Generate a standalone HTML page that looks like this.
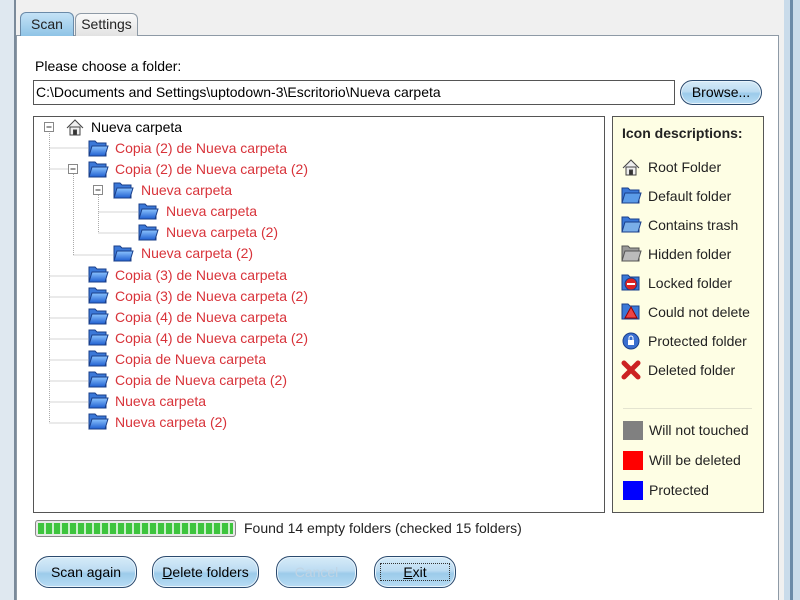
<!DOCTYPE html>
<html><head><meta charset="utf-8"><style>
*{box-sizing:border-box;margin:0;padding:0}
html,body{width:800px;height:600px;overflow:hidden}
body{background:#f0f0f0;font-family:"Liberation Sans",sans-serif;font-size:14px;color:#000;position:relative}
.a{position:absolute}
.t{position:absolute;white-space:nowrap;line-height:18px}
.red{color:#d8333a}
.btn{position:absolute;border:1px solid #2b4a6e;border-radius:14px;background:linear-gradient(#d6ebf8 0%,#bcdcf2 45%,#9ccbea 55%,#b8dcf4 100%);text-align:center;line-height:28px;font-size:14px;box-shadow:inset 0 0 0 1px #e8f4fc}
.lg{position:absolute;left:622px;white-space:nowrap;font-size:14px;color:#222}
</style></head><body>
<div class="a" style="left:0;top:0;width:16px;height:600px;background:#dfe8f0"></div>
<div class="a" style="left:14px;top:0;width:2px;height:600px;background:#7a8a9a"></div>
<div class="a" style="left:784px;top:0;width:16px;height:600px;background:#c9dbea"></div>
<div class="a" style="left:790px;top:0;width:3px;height:600px;background:#6a8aa8"></div>
<div class="a" style="left:16px;top:35px;width:763px;height:565px;background:#fff;border:1px solid #8e9aa6;border-bottom:none"></div>
<div class="a" style="left:20px;top:12px;width:54px;height:24px;background:linear-gradient(#c4e2f6,#8fc4e6);border:1px solid #6a8aa8;border-bottom:none;border-radius:6px 6px 0 0;text-align:center;line-height:22px;color:#222">Scan</div>
<div class="a" style="left:75px;top:13px;width:63px;height:23px;background:linear-gradient(#fafafa,#e2e2e2);border:1px solid #8e9aa6;border-bottom:none;border-radius:6px 6px 0 0;text-align:center;line-height:21px;color:#222">Settings</div>
<div class="t" style="left:35px;top:57px">Please choose a folder:</div>
<div class="a" style="left:33px;top:80px;width:642px;height:25px;border:1px solid #555;background:#fff"></div>
<div class="t" style="left:36px;top:83px">C:\Documents and Settings\uptodown-3\Escritorio\Nueva carpeta</div>
<div class="btn" style="left:680px;top:80px;width:82px;height:25px;line-height:23px">Browse...</div>
<div class="a" style="left:33px;top:116px;width:572px;height:397px;border:1px solid #555;background:#fff"></div>
<svg class="a" style="left:33px;top:116px" width="572" height="397">
<g stroke="#aaa" stroke-dasharray="1,1" fill="none">
<path d="M16.5 17V307M16.5 32H55M16.5 53H38M16.5 160H55M16.5 181H55M16.5 202H55M16.5 223H55M16.5 244H55M16.5 265H55M16.5 286H55M16.5 307H55"/>
<path d="M40.5 58V139M40.5 139H80M65.5 79V117M65.5 96H105M65.5 117H105"/>
</g>
<g fill="#fff" stroke="#888"><rect x="11.5" y="6.5" width="9" height="9"/><rect x="35.5" y="48.5" width="9" height="9"/><rect x="60.5" y="69.5" width="9" height="9"/></g>
<g stroke="#333"><path d="M13.5 11H18.5M37.5 53H42.5M62.5 74H67.5"/></g>
<g transform="translate(33,3)" fill="#eee" stroke="#444"><path d="M1 9L9 1L17 9"/><rect x="4" y="8" width="10" height="8"/><rect x="7.5" y="11" width="3" height="5" fill="#333"/></g>
</svg>
<svg class="a" style="left:0;top:0" width="620" height="520">
<defs><linearGradient id="fg" x1="0" y1="0" x2="0" y2="1"><stop offset="0" stop-color="#8cc4ff"/><stop offset="1" stop-color="#1f5fd0"/></linearGradient></defs>
<g stroke="#1a3f8a" stroke-width="1">
<g transform="translate(88,139)"><path d="M1 2h6l2 2h9v13H1z" fill="#3b78d8"/><path d="M4 7h16l-3 10H1z" fill="url(#fg)"/></g>
<g transform="translate(88,160)"><path d="M1 2h6l2 2h9v13H1z" fill="#3b78d8"/><path d="M4 7h16l-3 10H1z" fill="url(#fg)"/></g>
<g transform="translate(113,181)"><path d="M1 2h6l2 2h9v13H1z" fill="#3b78d8"/><path d="M4 7h16l-3 10H1z" fill="url(#fg)"/></g>
<g transform="translate(138,202)"><path d="M1 2h6l2 2h9v13H1z" fill="#3b78d8"/><path d="M4 7h16l-3 10H1z" fill="url(#fg)"/></g>
<g transform="translate(138,223)"><path d="M1 2h6l2 2h9v13H1z" fill="#3b78d8"/><path d="M4 7h16l-3 10H1z" fill="url(#fg)"/></g>
<g transform="translate(113,244)"><path d="M1 2h6l2 2h9v13H1z" fill="#3b78d8"/><path d="M4 7h16l-3 10H1z" fill="url(#fg)"/></g>
<g transform="translate(88,265)"><path d="M1 2h6l2 2h9v13H1z" fill="#3b78d8"/><path d="M4 7h16l-3 10H1z" fill="url(#fg)"/></g>
<g transform="translate(88,286)"><path d="M1 2h6l2 2h9v13H1z" fill="#3b78d8"/><path d="M4 7h16l-3 10H1z" fill="url(#fg)"/></g>
<g transform="translate(88,307)"><path d="M1 2h6l2 2h9v13H1z" fill="#3b78d8"/><path d="M4 7h16l-3 10H1z" fill="url(#fg)"/></g>
<g transform="translate(88,328)"><path d="M1 2h6l2 2h9v13H1z" fill="#3b78d8"/><path d="M4 7h16l-3 10H1z" fill="url(#fg)"/></g>
<g transform="translate(88,349)"><path d="M1 2h6l2 2h9v13H1z" fill="#3b78d8"/><path d="M4 7h16l-3 10H1z" fill="url(#fg)"/></g>
<g transform="translate(88,370)"><path d="M1 2h6l2 2h9v13H1z" fill="#3b78d8"/><path d="M4 7h16l-3 10H1z" fill="url(#fg)"/></g>
<g transform="translate(88,391)"><path d="M1 2h6l2 2h9v13H1z" fill="#3b78d8"/><path d="M4 7h16l-3 10H1z" fill="url(#fg)"/></g>
<g transform="translate(88,412)"><path d="M1 2h6l2 2h9v13H1z" fill="#3b78d8"/><path d="M4 7h16l-3 10H1z" fill="url(#fg)"/></g>
</g>
</svg>
<div class="t" style="left:91px;top:118px">Nueva carpeta</div>
<div class="t red" style="left:115px;top:139px">Copia (2) de Nueva carpeta</div>
<div class="t red" style="left:115px;top:160px">Copia (2) de Nueva carpeta (2)</div>
<div class="t red" style="left:141px;top:181px">Nueva carpeta</div>
<div class="t red" style="left:166px;top:202px">Nueva carpeta</div>
<div class="t red" style="left:166px;top:223px">Nueva carpeta (2)</div>
<div class="t red" style="left:141px;top:244px">Nueva carpeta (2)</div>
<div class="t red" style="left:115px;top:266px">Copia (3) de Nueva carpeta</div>
<div class="t red" style="left:115px;top:287px">Copia (3) de Nueva carpeta (2)</div>
<div class="t red" style="left:115px;top:308px">Copia (4) de Nueva carpeta</div>
<div class="t red" style="left:115px;top:329px">Copia (4) de Nueva carpeta (2)</div>
<div class="t red" style="left:115px;top:350px">Copia de Nueva carpeta</div>
<div class="t red" style="left:115px;top:371px">Copia de Nueva carpeta (2)</div>
<div class="t red" style="left:115px;top:392px">Nueva carpeta</div>
<div class="t red" style="left:115px;top:413px">Nueva carpeta (2)</div>
<div class="a" style="left:612px;top:116px;width:152px;height:397px;border:1px solid #555;background:#fefee4"></div>
<div class="t" style="left:622px;top:124px;font-weight:bold;color:#222">Icon descriptions:</div>
<svg class="a" style="left:620px;top:155px" width="24" height="230">
<g transform="translate(2,4)" fill="#eee" stroke="#444"><path d="M1 9L9 1L17 9"/><rect x="4" y="8" width="10" height="8"/><rect x="7.5" y="11" width="3" height="5" fill="#333"/></g>
<g transform="translate(1,31)" stroke="#1a3f8a"><path d="M1 2h6l2 2h9v13H1z" fill="#3b78d8"/><path d="M4 7h16l-3 10H1z" fill="#5b9be8"/></g>
<g transform="translate(1,60)" stroke="#1a3f8a"><path d="M1 2h6l2 2h9v13H1z" fill="#3b78d8"/><path d="M4 7h16l-3 10H1z" fill="#7aaee8"/></g>
<g transform="translate(1,89)" stroke="#555"><path d="M1 2h6l2 2h9v13H1z" fill="#999"/><path d="M4 7h16l-3 10H1z" fill="#bbb"/></g>
<g transform="translate(1,118)" stroke="#1a3f8a"><path d="M1 2h6l2 2h9v13H1z" fill="#3b78d8"/><circle cx="10" cy="11" r="6" fill="#d22"/><rect x="6" y="10" width="8" height="2" fill="#fff" stroke="none"/></g>
<g transform="translate(1,147)" stroke="#1a3f8a"><path d="M1 2h6l2 2h9v13H1z" fill="#3b78d8"/><path d="M10 5L16 16H4z" fill="#e44" stroke="#900"/></g>
<g transform="translate(1,176)"><circle cx="10" cy="10" r="8" fill="#3a6fd0" stroke="#1a3f8a"/><rect x="7" y="9" width="6" height="5" fill="#fff"/><path d="M8 9V7a2 2 0 0 1 4 0v2" stroke="#fff" fill="none"/></g>
<g transform="translate(1,205)" stroke="#c22" stroke-width="5" stroke-linecap="round"><path d="M3 3L17 17M17 3L3 17"/></g>
</svg>
<div class="lg" style="left:648px;top:159px">Root Folder</div>
<div class="lg" style="left:648px;top:188px">Default folder</div>
<div class="lg" style="left:648px;top:217px">Contains trash</div>
<div class="lg" style="left:648px;top:246px">Hidden folder</div>
<div class="lg" style="left:648px;top:275px">Locked folder</div>
<div class="lg" style="left:648px;top:304px">Could not delete</div>
<div class="lg" style="left:648px;top:333px">Protected folder</div>
<div class="lg" style="left:648px;top:362px">Deleted folder</div>
<div class="a" style="left:623px;top:408px;width:129px;height:1px;background:#e4e4d0"></div>
<div class="a" style="left:623px;top:421px;width:20px;height:19px;background:#808080"></div>
<div class="a" style="left:623px;top:451px;width:20px;height:19px;background:#f00"></div>
<div class="a" style="left:623px;top:481px;width:20px;height:19px;background:#00f"></div>
<div class="lg" style="left:649px;top:422px">Will not touched</div>
<div class="lg" style="left:649px;top:452px">Will be deleted</div>
<div class="lg" style="left:649px;top:482px">Protected</div>
<div class="a" style="left:35px;top:520px;width:201px;height:17px;border:1px solid #888;border-radius:3px;background:#e8e8e8"></div>
<div class="a" style="left:38px;top:523px;width:195px;height:11px;background:repeating-linear-gradient(90deg,#3ec43e 0 6px,#c8f0c8 6px 8px)"></div>
<div class="t" style="left:244px;top:519px;color:#222">Found 14 empty folders (checked 15 folders)</div>
<div class="btn" style="left:35px;top:556px;width:102px;height:32px;line-height:30px">Scan again</div>
<div class="btn" style="left:152px;top:556px;width:107px;height:32px;line-height:30px"><u>D</u>elete folders</div>
<div class="btn" style="left:276px;top:556px;width:81px;height:32px;line-height:30px;color:#c0d4e4">Cancel</div>
<div class="btn" style="left:374px;top:556px;width:82px;height:32px;line-height:30px"><span style="border:1px dotted #333;padding:0 22px"><u>E</u>xit</span></div>
</body></html>
